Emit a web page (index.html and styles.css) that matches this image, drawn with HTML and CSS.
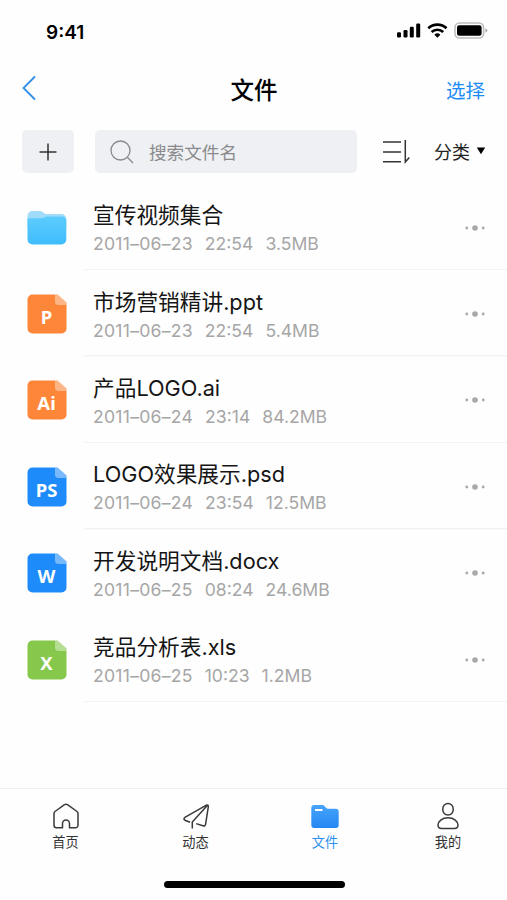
FILE: index.html
```
<!DOCTYPE html>
<html lang="zh-CN">
<head>
    <meta charset="UTF-8">
    <meta name="viewport" content="width=device-width, initial-scale=1.0">
    <title>文件</title>
    <link rel="stylesheet" href="styles.css">
</head>
<body>
    <div class="status-bar">
        <span class="time">9:41</span>
        <svg class="status-icons" width="92" height="20" viewBox="0 0 92 20">
            <rect x="1" y="12.3" width="4" height="5.2" rx="1.2"/>
            <rect x="7.5" y="10" width="4" height="7.5" rx="1.2"/>
            <rect x="13.8" y="6.8" width="4" height="10.7" rx="1.2"/>
            <rect x="20.2" y="3.5" width="4" height="14" rx="1.2"/>
            <g fill="none" stroke="#000" stroke-width="2.7">
                <path d="M32.3 8.2a13.2 13.2 0 0 1 18.2 0"/>
                <path d="M35.6 12a8.6 8.6 0 0 1 11.6 0"/>
            </g>
            <path d="M41.4 17.8l-3-3.1a4.4 4.4 0 0 1 6 0z"/>
            <rect x="59" y="3" width="28.6" height="15" rx="4.5" fill="none" stroke="#bdbdbd" stroke-width="1.6"/>
            <rect x="61" y="5.2" width="24.6" height="10.6" rx="2.2"/>
            <path d="M89.4 8.4q2 .6 2 2.2t-2 2.2z" fill="#aaa"/>
        </svg>
    </div>

    <header class="nav">
        <svg class="back" width="16" height="26" viewBox="0 0 16 26"><path d="M13 1.5L1.5 13 13 24.5"/></svg>
        <h1>文件</h1>
        <a class="select">选择</a>
    </header>

    <div class="toolbar">
        <button class="add">
            <svg width="18" height="18" viewBox="0 0 18 18"><path d="M9 .5v17M.5 9h17"/></svg>
        </button>
        <div class="search">
            <svg width="24" height="24" viewBox="0 0 24 24"><circle cx="10.5" cy="10.5" r="9.5"/><path d="M17.3 17.3l5.7 5.7"/></svg>
            <span>搜索文件名</span>
        </div>
        <svg class="sort" width="28" height="24" viewBox="0 0 28 24"><path d="M0 2h18M0 11.9h18M0 21.8h18M22.3 0v22l4-4.600"/></svg>
        <div class="category">分类<svg width="10" height="8" viewBox="0 0 10 8"><path d="M.8.6h8.4L5 7.2z"/></svg></div>
    </div>

    <ul class="file-list">
        <li class="file">
            <svg class="file-icon" width="40" height="40" viewBox="0 0 40 40">
                <defs>
                    <linearGradient id="folder" x1="0" y1="0" x2="0" y2="1">
                        <stop offset="0" stop-color="#5cccfe"/>
                        <stop offset="1" stop-color="#40bcfc"/>
                    </linearGradient>
                </defs>
                <path fill="#a0dcfa" d="M.5 8a5 5 0 0 1 5-5h7.200q1.800 0 3.200 1.200l2.500 1.900h15.900a5 5 0 0 1 5 5V20H.5z"/>
                <path fill="url(#folder)" d="M.5 10.200h14.300q1.400 0 2.600-.8l.6-.4q1-.6 2.400-.6h14.200q4.700 0 4.700 4.600v18.500a5 5 0 0 1-5 5H5.500a5 5 0 0 1-5-5z"/>
            </svg>
            <div class="info">
                <h2>宣传视频集合</h2>
                <p><span class="date">2011–06–23</span><span>22:54</span><span>3.5MB</span></p>
            </div>
            <svg class="more" width="20" height="8" viewBox="0 0 20 8"><circle cx="1.8" cy="4" r="1.4"/><circle cx="10" cy="4" r="2.8"/><circle cx="18.2" cy="4" r="1.4"/></svg>
        </li>
        <li class="file">
            <svg class="file-icon orange" width="40" height="40" viewBox="0 0 40 40">
                <path d="M5.5.5h25l9 8v26a5 5 0 0 1-5 5h-29a5 5 0 0 1-5-5v-29a5 5 0 0 1 5-5z"/>
                <path class="fold" d="M28 .5h2.5l9 8V11h-8Q28 11 28 7.5z"/>
                <text x="19.5" y="29.5">P</text>
            </svg>
            <div class="info">
                <h2>市场营销精讲.ppt</h2>
                <p><span class="date">2011–06–23</span><span>22:54</span><span>5.4MB</span></p>
            </div>
            <svg class="more" width="20" height="8" viewBox="0 0 20 8"><circle cx="1.8" cy="4" r="1.4"/><circle cx="10" cy="4" r="2.8"/><circle cx="18.2" cy="4" r="1.4"/></svg>
        </li>
        <li class="file">
            <svg class="file-icon orange" width="40" height="40" viewBox="0 0 40 40">
                <path d="M5.5.5h25l9 8v26a5 5 0 0 1-5 5h-29a5 5 0 0 1-5-5v-29a5 5 0 0 1 5-5z"/>
                <path class="fold" d="M28 .5h2.5l9 8V11h-8Q28 11 28 7.5z"/>
                <text x="19.5" y="29.5">Ai</text>
            </svg>
            <div class="info">
                <h2>产品LOGO.ai</h2>
                <p><span class="date">2011–06–24</span><span>23:14</span><span>84.2MB</span></p>
            </div>
            <svg class="more" width="20" height="8" viewBox="0 0 20 8"><circle cx="1.8" cy="4" r="1.4"/><circle cx="10" cy="4" r="2.8"/><circle cx="18.2" cy="4" r="1.4"/></svg>
        </li>
        <li class="file">
            <svg class="file-icon blue" width="40" height="40" viewBox="0 0 40 40">
                <path d="M5.5.5h25l9 8v26a5 5 0 0 1-5 5h-29a5 5 0 0 1-5-5v-29a5 5 0 0 1 5-5z"/>
                <path class="fold" d="M28 .5h2.5l9 8V11h-8Q28 11 28 7.5z"/>
                <text x="19.5" y="29.5">PS</text>
            </svg>
            <div class="info">
                <h2>LOGO效果展示.psd</h2>
                <p><span class="date">2011–06–24</span><span>23:54</span><span>12.5MB</span></p>
            </div>
            <svg class="more" width="20" height="8" viewBox="0 0 20 8"><circle cx="1.8" cy="4" r="1.4"/><circle cx="10" cy="4" r="2.8"/><circle cx="18.2" cy="4" r="1.4"/></svg>
        </li>
        <li class="file no-line">
            <svg class="file-icon blue" width="40" height="40" viewBox="0 0 40 40">
                <path d="M5.5.5h25l9 8v26a5 5 0 0 1-5 5h-29a5 5 0 0 1-5-5v-29a5 5 0 0 1 5-5z"/>
                <path class="fold" d="M28 .5h2.5l9 8V11h-8Q28 11 28 7.5z"/>
                <text x="19.5" y="29.5">W</text>
            </svg>
            <div class="info">
                <h2>开发说明文档.docx</h2>
                <p><span class="date">2011–06–25</span><span>08:24</span><span>24.6MB</span></p>
            </div>
            <svg class="more" width="20" height="8" viewBox="0 0 20 8"><circle cx="1.8" cy="4" r="1.4"/><circle cx="10" cy="4" r="2.8"/><circle cx="18.2" cy="4" r="1.4"/></svg>
        </li>
        <li class="file">
            <svg class="file-icon green" width="40" height="40" viewBox="0 0 40 40">
                <path d="M5.5.5h25l9 8v26a5 5 0 0 1-5 5h-29a5 5 0 0 1-5-5v-29a5 5 0 0 1 5-5z"/>
                <path class="fold" d="M28 .5h2.5l9 8V11h-8Q28 11 28 7.5z"/>
                <text x="19.5" y="29.5">X</text>
            </svg>
            <div class="info">
                <h2>竞品分析表.xls</h2>
                <p><span class="date">2011–06–25</span><span>10:23</span><span>1.2MB</span></p>
            </div>
            <svg class="more" width="20" height="8" viewBox="0 0 20 8"><circle cx="1.8" cy="4" r="1.4"/><circle cx="10" cy="4" r="2.8"/><circle cx="18.2" cy="4" r="1.4"/></svg>
        </li>
    </ul>

    <nav class="tab-bar">
        <a class="tab">
            <svg width="28" height="28" viewBox="0 0 28 28"><path d="M10.5 25.8h-6A2.500 2.500 0 0 1 2 23.300V11.500q0-1.300 1-2l9.500-6.800q1.500-1 3 0L25 9.500q1 .7 1 2v11.800a2.500 2.500 0 0 1-2.500 2.500h-6v-4.300a3.500 3.500 0 0 0-7 0z"/></svg>
            <span>首页</span>
        </a>
        <a class="tab">
            <svg width="28" height="28" viewBox="0 0 28 28"><path d="M8 20.300l-4.500-1.800q-3-1.500-.2-3.400L24 3.300q2.600-1 2.300 1.600l-2.700 17.300q-.4 2.300-2.700 1.600l-6.700-2.200M25.500 3.300L10.300 20v6.500"/></svg>
            <span>动态</span>
        </a>
        <a class="tab active">
            <svg width="28" height="28" viewBox="0 0 28 28">
                <defs>
                    <linearGradient id="tab-folder" x1="0" y1="0" x2="0" y2="1">
                        <stop offset="0" stop-color="#47a4fc"/>
                        <stop offset="1" stop-color="#2488f2"/>
                    </linearGradient>
                </defs>
                <path class="body" d="M.3 6a3 3 0 0 1 3-3h8q1.500 0 2.400 1.200l1 1.300q1 1.300 2.500 1.300h7.500a3 3 0 0 1 3 3v13.200a3 3 0 0 1-3 3H3.300a3 3 0 0 1-3-3z"/>
                <path class="slot" d="M4 8h7.500"/>
            </svg>
            <span>文件</span>
        </a>
        <a class="tab">
            <svg width="28" height="28" viewBox="0 0 28 28"><rect x="8.8" y="1.5" width="10.4" height="11.5" rx="5.2"/><path d="M14 15.800c6 0 10 3.700 10 7.300 0 2.500-1.300 3.400-3.500 3.400h-13c-2.200 0-3.500-.9-3.500-3.400 0-3.600 4-7.300 10-7.300z"/></svg>
            <span>我的</span>
        </a>
    </nav>
    <div class="home-indicator"></div>
</body>
</html>
```

FILE: styles.css
```
* {
    box-sizing: border-box;
    margin: 0;
    padding: 0;
}
body {
    display: flex;
    flex-direction: column;
    width: 507px;
    height: 900px;
    background-color: #fefefe;
    color: #151515;
    font-family: Inter, "Noto Sans CJK SC", sans-serif;
    overflow: hidden;
}
.status-bar {
    display: flex;
    justify-content: space-between;
    align-items: center;
    height: 62px;
    padding: 2px 19px 0 46px;
}
.time {
    font-size: 19px;
    font-weight: 600;
    color: #000;
}
.status-icons {
    margin-bottom: 4px;
}
.nav {
    display: grid;
    grid-template-columns: 1fr auto 1fr;
    align-items: center;
    height: 56px;
    padding: 0 22px;
}
.back {
    fill: none;
    stroke: #2e8ee8;
    stroke-width: 1.8;
    margin-bottom: 4px;
}
.nav h1 {
    padding: 2px 0 0 1px;
    font-size: 23.5px;
    font-weight: 500;
    line-height: 30px;
    color: #000;
}
.select {
    justify-self: end;
    margin-bottom: 1px;
    font-size: 19.5px;
    color: #1c8cf5;
}
.toolbar {
    display: flex;
    align-items: center;
    height: 65px;
    padding: 2px 21px 0 22px;
}
.add {
    display: flex;
    align-items: center;
    justify-content: center;
    width: 52px;
    height: 43px;
    border: none;
    border-radius: 5px;
    background-color: #eef0f3;
}
.add svg {
    stroke: #333;
    stroke-width: 1.5;
}
.search {
    display: flex;
    align-items: center;
    gap: 15px;
    width: 262px;
    height: 43px;
    margin-left: 21px;
    padding-left: 15px;
    border-radius: 5px;
    background-color: #eef0f3;
    color: #8a8a8c;
    font-size: 17.6px;
}
.search svg {
    fill: none;
    stroke: #8a8a8c;
    stroke-width: 1.3;
}
.sort {
    margin-left: 26px;
    fill: none;
    stroke: #333;
    stroke-width: 1.5;
}
.category {
    display: flex;
    align-items: center;
    gap: 6px;
    margin-left: auto;
    padding-bottom: 1px;
    font-size: 18px;
    color: #222;
}
.file-list {
    flex: 1;
    margin-top: 1px;
    list-style: none;
}
.file {
    display: flex;
    align-items: center;
    height: 86.4px;
    padding: 1px 22px 0 27px;
    background: linear-gradient(#f3f3f4, #f3f3f4) 84px 100% / 423px 1.5px no-repeat;
}
.file.no-line {
    background: none;
}
.file-icon text {
    fill: #fff;
    font-family: "Noto Sans", sans-serif;
    font-size: 18.5px;
    font-weight: 700;
    text-anchor: middle;
}
.orange {
    fill: #fd8638;
}
.blue {
    fill: #1e8bfb;
}
.green {
    fill: #85c84b;
}
.fold {
    fill: #fff;
    fill-opacity: 0.4;
}
.info {
    flex: 1;
    margin-left: 26px;
    padding-top: 2px;
}
.info h2 {
    font-size: 21.7px;
    font-weight: 400;
    line-height: 30px;
    white-space: nowrap;
}
.info p {
    display: flex;
    gap: 12px;
    font-size: 17.6px;
    line-height: 27px;
    color: #a6a6a6;
}
.info .date {
    letter-spacing: 0.25px;
}
.more {
    fill: #a8a8a8;
}
.tab-bar {
    display: grid;
    grid-template-columns: 131px 129px 130px 116px;
    height: 77px;
    padding-top: 13px;
    border-top: 1px solid #f0f0f1;
}
.tab {
    display: flex;
    flex-direction: column;
    align-items: center;
    gap: 1px;
    font-size: 13.2px;
    line-height: 22px;
    color: #333;
}
.tab svg {
    fill: none;
    stroke: #3a3a3a;
    stroke-width: 1.5;
    stroke-linejoin: round;
}
.tab.active {
    color: #2b8fee;
}
.tab .body {
    fill: url(#tab-folder);
    stroke: none;
}
.tab .slot {
    stroke: #fff;
    stroke-width: 2;
}
.home-indicator {
    width: 181px;
    height: 7px;
    margin: 16px 162px 12px 164px;
    border-radius: 4px;
    background-color: #000;
}
```
